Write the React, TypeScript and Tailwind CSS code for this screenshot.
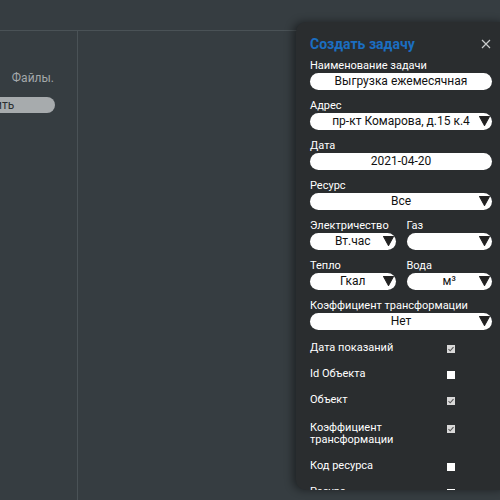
import React from 'react';

const font = { fontFamily: 'Roboto, "Noto Sans", sans-serif' };

const Arrow: React.FC = () => (
  <svg viewBox="0 0 10 9" className="w-[11px] h-[10px] shrink-0">
    <path d="M0.5 0.5 H9.5 L5 8.5 Z" fill="#222" stroke="#222" strokeLinejoin="round" />
  </svg>
);

const Field: React.FC<{ value: string; select?: boolean }> = ({ value, select }) => (
  <div className="relative h-[17px] rounded-full bg-white flex items-center justify-center text-[12px] leading-[17px] text-[#111]">
    <span>{value}</span>
    {select && (
      <span className="absolute right-[2px] top-[3px]">
        <Arrow />
      </span>
    )}
  </div>
);

const Group: React.FC<{ label: string; value: string; select?: boolean }> = ({ label, value, select }) => (
  <div className="flex flex-col">
    <div className="text-[11px] leading-[14px] text-white">{label}</div>
    <Field value={value} select={select} />
  </div>
);

const Check: React.FC<{ checked?: boolean }> = ({ checked }) => (
  <div className={`w-[8px] h-[8px] mt-[3px] flex items-center justify-center ${checked ? 'bg-[#d9d9d9]' : 'bg-white'}`}>
    {checked && (
      <svg viewBox="0 0 8 8" className="w-[8px] h-[8px]">
        <path d="M1.5 4.2 L3.2 5.8 L6.5 2.2" fill="none" stroke="#555" strokeWidth="1.1" />
      </svg>
    )}
  </div>
);

const checks = [
  { label: 'Дата показаний', checked: true },
  { label: 'Id Объекта', checked: false },
  { label: 'Объект', checked: true },
  { label: 'Коэффициент трансформации', checked: true, wrap: true },
  { label: 'Код ресурса', checked: false },
  { label: 'Ресурс', checked: false },
];

const App: React.FC = () => {
  return (
    <div className="relative w-[500px] h-[500px] overflow-hidden bg-[#363d41]" style={font}>
      {/* background page */}
      <div className="h-[31px] border-b border-[#4a5256]" />
      <div className="flex h-[469px]">
        <div className="w-[78px] border-r border-[#4a5256] overflow-hidden flex flex-col">
          <div className="mt-[40px] pr-[23px] text-right text-[12px] leading-[14px] text-[#a3a8aa]">Файлы.</div>
          <div className="mt-[12px] ml-[-86px] w-[141px] h-[16px] rounded-full bg-[#a7abad] flex items-center justify-center text-[12px] text-[#2b2f31]">
            Выгрузить
          </div>
        </div>
        <div className="flex-1" />
      </div>

      {/* create task drawer */}
      <div className="absolute left-[296px] top-[22px] w-[214px] h-[468px] rounded-[10px] bg-[#2a2d2f] shadow-[-3px_0_8px_rgba(0,0,0,0.45)] overflow-hidden pl-[14px] pr-[18px] pt-[12px]">
        <div className="flex items-center justify-between h-[20px]">
          <div className="text-[14px] font-bold text-[#1b6ec2]">Создать задачу</div>
          <svg viewBox="0 0 10 10" className="w-[10px] h-[10px] mr-[1px]">
            <path d="M1 1 L9 9 M9 1 L1 9" stroke="#c9cbcc" strokeWidth="1.2" />
          </svg>
        </div>
        <div className="mt-[5px] flex flex-col gap-[9px]">
          <Group label="Наименование задачи" value="Выгрузка ежемесячная" />
          <Group label="Адрес" value="пр-кт Комарова, д.15 к.4" select />
          <Group label="Дата" value="2021-04-20" />
          <Group label="Ресурс" value="Все" select />
          <div className="grid grid-cols-2 gap-x-[11px]">
            <Group label="Электричество" value="Вт.час" select />
            <Group label="Газ" value="" select />
          </div>
          <div className="grid grid-cols-2 gap-x-[11px]">
            <Group label="Тепло" value="Гкал" select />
            <Group label="Вода" value="м³" select />
          </div>
          <Group label="Коэффициент трансформации" value="Нет" select />
        </div>
        <div className="mt-[5px] flex flex-col">
          {checks.map((c) => (
            <div key={c.label} className={`flex items-start ${c.wrap ? 'pt-[9px] pb-[7px]' : 'py-[7px]'}`}>
              <div className="w-[137px] text-[11px] leading-[12px] text-white">
                {c.wrap ? (
                  <>
                    Коэффициент
                    <br />
                    трансформации
                  </>
                ) : (
                  c.label
                )}
              </div>
              <Check checked={c.checked} />
            </div>
          ))}
        </div>
      </div>
    </div>
  );
};

export default App;
